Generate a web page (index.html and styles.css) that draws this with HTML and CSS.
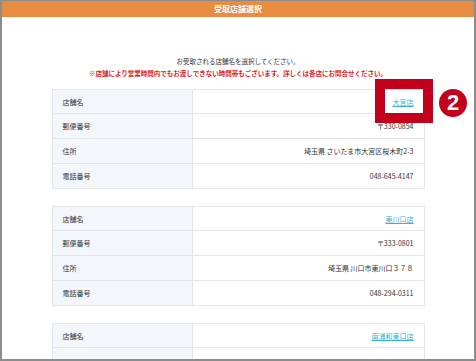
FILE: index.html
```html
<!DOCTYPE html>
<html lang="ja">
<head>
<meta charset="utf-8">
<link rel="stylesheet" href="styles.css">
</head>
<body>
<div class="frame">
  <div class="header">受取店舗選択</div>
  <div class="content">
    <p class="lead">お受取される店舗名を選択してください。</p>
    <p class="notice">※店舗により営業時間内でもお渡しできない時間帯もございます。詳しくは各店にお問合せください。</p>
    <div class="stores">
      <table class="store">
        <tr><th>店舗名</th><td><a href="#">大宮店</a></td></tr>
        <tr><th>郵便番号</th><td>〒330-0854</td></tr>
        <tr><th>住所</th><td>埼玉県 さいたま市大宮区桜木町2-3</td></tr>
        <tr><th>電話番号</th><td>048-645-4147</td></tr>
      </table>
      <table class="store">
        <tr><th>店舗名</th><td><a href="#">東川口店</a></td></tr>
        <tr><th>郵便番号</th><td>〒333-0801</td></tr>
        <tr><th>住所</th><td>埼玉県 川口市東川口３７８</td></tr>
        <tr><th>電話番号</th><td>048-294-0311</td></tr>
      </table>
      <table class="store">
        <tr><th>店舗名</th><td><a href="#">南浦和東口店</a></td></tr>
        <tr><th></th><td></td></tr>
      </table>
    </div>
  </div>
  <div class="callout"></div>
  <div class="badge">2</div>
</div>
</body>
</html>
```
FILE: styles.css
```css
* { box-sizing: border-box; }
html, body { margin: 0; padding: 0; background: #fff; }
body {
  font-family: "Noto Sans CJK JP", "Noto Sans", sans-serif;
  color: #333;
}
.frame {
  position: relative;
  width: 476px;
  height: 361px;
  overflow: hidden;
  border: 2px solid #8c8c8c;
  border-top-width: 1px;
  background: #fff;
}
.header {
  height: 16px;
  line-height: 16px;
  background: #e98c3f;
  color: #fff;
  font-weight: bold;
  font-size: 8px;
  text-align: center;
}
.content {
  padding-top: 38px;
}
.lead, .notice {
  margin: 0;
  text-align: center;
  font-size: 6.5px;
  line-height: 12px;
}
.notice {
  color: #d8232a;
  font-weight: bold;
}
.stores {
  display: flex;
  flex-direction: column;
  align-items: center;
  gap: 17px;
  margin-top: 10px;
}
.store {
  width: 373px;
  border-collapse: collapse;
  border: 1px solid #e5e5e5;
}
.store th, .store td {
  height: 25px;
  border-top: 1px solid #e5e5e5;
  font-size: 7px;
  font-weight: normal;
  padding: 0 10px;
  vertical-align: middle;
}
.store tr:first-child th, .store tr:first-child td { border-top: none; height: 24px; }
.store th {
  width: 140px;
  text-align: left;
  background: #f3f6fb;
  border-right: 1px solid #e5e5e5;
}
.store td { text-align: right; }
.store a { color: #36b1d0; text-decoration: underline; }
.callout {
  position: absolute;
  left: 373px;
  top: 78px;
  width: 58px;
  height: 44px;
  border: 10px solid #c2001b;
}
.badge {
  position: absolute;
  left: 437px;
  top: 88px;
  width: 28px;
  height: 28px;
  border-radius: 50%;
  background: #c2001b;
  color: #fff;
  font-family: "Liberation Sans", "DejaVu Sans", sans-serif;
  font-weight: bold;
  font-size: 22px;
  line-height: 28px;
  text-align: center;
}
```
